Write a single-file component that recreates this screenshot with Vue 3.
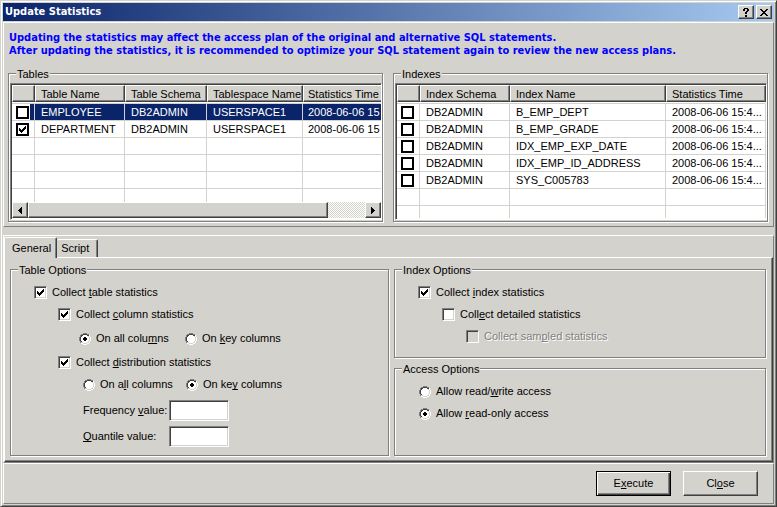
<script setup>
import { ref, reactive, h } from 'vue'

const Tick = () =>
  h('svg', { class: 'mark', width: 7, height: 7, viewBox: '0 0 7 7', 'shape-rendering': 'crispEdges', 'aria-hidden': 'true' }, [
    h('path', { d: 'M0 2h1v1h1v1h1v-1h1v-1h1v-1h1v-1h1v3h-1v1h-1v1h-1v1h-1v1h-1v-1h-1v-1h-1z' })
  ])

const Ring = (props) =>
  h('svg', { class: 'mark', width: 12, height: 12, viewBox: '0 0 12 12', 'shape-rendering': 'crispEdges', 'aria-hidden': 'true' }, [
    h('path', { fill: '#fff', d: 'M4 1h4v1h2v2h1v4h-1v2h-2v1h-4v-1h-2v-2h-1v-4h1v-2h2z' }),
    h('path', { fill: '#808080', d: 'M4 0h4v1h-4zM2 1h2v1h-2zM8 1h2v1h-2zM1 2h1v2h-1zM0 4h1v4h-1zM1 8h1v2h-1z' }),
    h('path', { fill: '#404040', d: 'M4 1h4v1h-4zM2 2h2v1h-2zM8 2h2v1h-2zM2 3h1v1h-1zM1 4h1v4h-1zM2 8h1v1h-1z' }),
    h('path', { fill: '#d4d2cc', d: 'M9 3h1v1h-1zM10 4h1v4h-1zM9 8h1v1h-1zM2 9h2v1h-2zM8 9h2v1h-2zM4 10h4v1h-4z' }),
    h('path', { fill: '#fff', d: 'M10 2h1v2h-1zM11 4h1v4h-1zM10 8h1v2h-1zM8 10h2v1h-2zM2 10h2v1h-2zM4 11h4v1h-4z' }),
    props.on ? h('path', { fill: '#000', d: 'M5 4h2v1h1v2h-1v1h-2v-1h-1v-2h1z' }) : null
  ])
Ring.props = ['on']

const tables = reactive([
  { on: false, cells: ['EMPLOYEE', 'DB2ADMIN', 'USERSPACE1', '2008-06-06 15'], selected: true },
  { on: true, cells: ['DEPARTMENT', 'DB2ADMIN', 'USERSPACE1', '2008-06-06 15'] }
])
const indexes = reactive(
  ['B_EMP_DEPT', 'B_EMP_GRADE', 'IDX_EMP_EXP_DATE', 'IDX_EMP_ID_ADDRESS', 'SYS_C005783'].map((name) => ({
    on: false,
    cells: ['DB2ADMIN', name, '2008-06-06 15:4...']
  }))
)
const lists = [
  { key: 'tables', title: 'Tables', heads: ['Table Name', 'Table Schema', 'Tablespace Name', 'Statistics Time'], rows: tables, blanks: 4, scroll: true },
  { key: 'indexes', title: 'Indexes', heads: ['Index Schema', 'Index Name', 'Statistics Time'], rows: indexes, blanks: 2, scroll: false }
]

const tab = ref('General')
const opt = reactive({ table: true, column: true, dist: true, index: true, detailed: false, sampled: false })
const columnScope = ref('all')
const distScope = ref('key')
const access = ref('read')
const frequency = ref('')
const quantile = ref('')
</script>

<template>
  <main class="window">
    <header class="titlebar">
      <h1>Update Statistics</h1>
      <button type="button" class="sys" aria-label="Help">
        <svg width="6" height="9" viewBox="0 0 6 9" shape-rendering="crispEdges"><path d="M1 0h4v1h1v2h-1v1h-1v2h-2v-2h1v-1h1v-2h-2v2h-2v-2h1zM2 7h2v2h-2z" /></svg>
      </button>
      <button type="button" class="sys" aria-label="Close window">
        <svg width="8" height="7" viewBox="0 0 8 7" shape-rendering="crispEdges"><path d="M0 0h2v1h1v1h2v-1h1v-1h2v1h-1v1h-1v1h-1v1h1v1h1v1h1v1h-2v-1h-1v-1h-2v1h-1v1h-2v-1h1v-1h1v-1h1v-1h-1v-1h-1v-1h-1z" /></svg>
      </button>
    </header>

    <section class="upper">
      <p class="notice">
        Updating the statistics may affect the access plan of the original and alternative SQL statements.<br />
        After updating the statistics, it is recommended to optimize your SQL statement again to review the new access plans.
      </p>
      <div class="lists">
        <fieldset v-for="l in lists" :key="l.key" class="group list-group">
          <legend>{{ l.title }}</legend>
          <div class="listbox">
            <div class="viewport">
              <table :class="l.key">
                <colgroup>
                  <col class="c0" />
                  <col v-for="(t, i) in l.heads" :key="t" :class="'c' + (i + 1)" />
                </colgroup>
                <thead>
                  <tr>
                    <th><span></span></th>
                    <th v-for="t in l.heads" :key="t"><span>{{ t }}</span></th>
                  </tr>
                </thead>
                <tbody>
                  <tr v-for="r in l.rows" :key="r.cells.join()" :class="{ selected: r.selected }">
                    <td class="pick">
                      <span class="tick flat">
                        <input v-model="r.on" type="checkbox" :aria-label="r.cells[l.scroll ? 0 : 1]" />
                        <Tick v-if="r.on" />
                      </span>
                    </td>
                    <td v-for="(c, i) in r.cells" :key="i">{{ c }}</td>
                  </tr>
                  <tr v-for="n in l.blanks" :key="n">
                    <td class="pick"></td>
                    <td v-for="t in l.heads" :key="t"></td>
                  </tr>
                </tbody>
              </table>
            </div>
            <div v-if="l.scroll" class="scrollbar">
              <button type="button" aria-label="Scroll left">
                <svg width="4" height="7" viewBox="0 0 4 7" shape-rendering="crispEdges"><path d="M3 0h1v7h-1v-1h-1v-1h-1v-1h-1v-1h1v-1h1v-1h1z" /></svg>
              </button>
              <div class="thumb"></div>
              <div class="track"></div>
              <button type="button" aria-label="Scroll right">
                <svg width="4" height="7" viewBox="0 0 4 7" shape-rendering="crispEdges"><path d="M0 0h1v1h1v1h1v1h1v1h-1v1h-1v1h-1v1h-1z" /></svg>
              </button>
            </div>
          </div>
        </fieldset>
      </div>
    </section>

    <section class="tabs">
      <nav class="tabrow" role="tablist">
        <button v-for="t in ['General', 'Script']" :key="t" type="button" role="tab" :aria-selected="tab === t" :class="{ active: tab === t }" @click="tab = t">{{ t }}</button>
      </nav>
      <div class="page">
        <fieldset class="group table-options">
          <legend>Table Options</legend>
          <label class="row"><span class="tick"><input v-model="opt.table" type="checkbox" /><Tick v-if="opt.table" /></span><span>Collect <u>t</u>able statistics</span></label>
          <label class="row in1"><span class="tick"><input v-model="opt.column" type="checkbox" /><Tick v-if="opt.column" /></span><span>Collect <u>c</u>olumn statistics</span></label>
          <div class="pair">
            <label class="row"><span class="radio"><input v-model="columnScope" type="radio" name="column" value="all" /><Ring :on="columnScope === 'all'" /></span><span>On all colu<u>m</u>ns</span></label>
            <label class="row"><span class="radio"><input v-model="columnScope" type="radio" name="column" value="key" /><Ring :on="columnScope === 'key'" /></span><span>On <u>k</u>ey columns</span></label>
          </div>
          <label class="row in1"><span class="tick"><input v-model="opt.dist" type="checkbox" /><Tick v-if="opt.dist" /></span><span>Collect <u>d</u>istribution statistics</span></label>
          <div class="pair dist">
            <label class="row"><span class="radio"><input v-model="distScope" type="radio" name="dist" value="all" /><Ring :on="distScope === 'all'" /></span><span>On a<u>l</u>l columns</span></label>
            <label class="row"><span class="radio"><input v-model="distScope" type="radio" name="dist" value="key" /><Ring :on="distScope === 'key'" /></span><span>On ke<u>y</u> columns</span></label>
          </div>
          <div class="values">
            <label for="frequency">Frequency <u>v</u>alue:</label>
            <input id="frequency" v-model="frequency" type="text" />
            <label for="quantile"><u>Q</u>uantile value:</label>
            <input id="quantile" v-model="quantile" type="text" />
          </div>
        </fieldset>

        <div class="side">
          <fieldset class="group index-options">
            <legend>Index Options</legend>
            <label class="row"><span class="tick"><input v-model="opt.index" type="checkbox" /><Tick v-if="opt.index" /></span><span>Collect <u>i</u>ndex statistics</span></label>
            <label class="row in1"><span class="tick"><input v-model="opt.detailed" type="checkbox" /><Tick v-if="opt.detailed" /></span><span>Coll<u>e</u>ct detailed statistics</span></label>
            <label class="row in2 off"><span class="tick"><input v-model="opt.sampled" type="checkbox" :disabled="!opt.detailed" /><Tick v-if="opt.sampled" /></span><span>Collect sam<u>p</u>led statistics</span></label>
          </fieldset>
          <fieldset class="group access-options">
            <legend>Access Options</legend>
            <label class="row"><span class="radio"><input v-model="access" type="radio" name="access" value="write" /><Ring :on="access === 'write'" /></span><span>Allow read/<u>w</u>rite access</span></label>
            <label class="row"><span class="radio"><input v-model="access" type="radio" name="access" value="read" /><Ring :on="access === 'read'" /></span><span>Allow <u>r</u>ead-only access</span></label>
          </fieldset>
        </div>
      </div>
    </section>

    <footer class="actions">
      <button type="button" class="default"><span>E<u>x</u>ecute</span></button>
      <button type="button"><span>Cl<u>o</u>se</span></button>
    </footer>
  </main>
</template>

<style>
body {
  margin: 0;
  background: #d4d2cc;
}
</style>

<style scoped>
* {
  box-sizing: border-box;
}
.window {
  --face: #d4d2cc;
  --gray: #808080;
  --dark: #404040;
  display: flex;
  flex-direction: column;
  min-height: 100vh;
  padding: 1px;
  background: var(--face);
  border: 1px solid;
  border-color: var(--face) var(--dark) var(--dark) var(--face);
  box-shadow: inset 1px 1px #fff, inset -1px -1px var(--gray);
  font: 11px/13px "Liberation Sans", Arial, sans-serif;
  color: #000;
}
button,
input {
  font: inherit;
  color: inherit;
  margin: 0;
  padding: 0;
  border-radius: 0;
}
u {
  text-underline-offset: 1px;
  text-decoration-skip-ink: none;
}
svg {
  display: block;
}
.titlebar {
  display: flex;
  align-items: center;
  height: 18px;
  margin: 1px;
  padding: 0 2px;
  background: linear-gradient(90deg, #0a246a, #a6caf0);
}
h1 {
  flex: 1;
  margin: 0;
  font: bold 11px/18px "DejaVu Sans Condensed", Tahoma, sans-serif;
  color: #fff;
}
.sys,
.scrollbar button {
  display: grid;
  place-items: center;
  width: 16px;
  height: 14px;
  background: var(--face);
  border: 1px solid;
  border-color: #fff var(--dark) var(--dark) #fff;
  box-shadow: inset -1px -1px var(--gray);
}
.sys + .sys {
  margin-left: 2px;
}
.upper {
  padding: 8px 5px 4px 4px;
  border: 1px solid;
  border-color: #fff var(--gray) var(--gray) #fff;
  margin: 0 1px;
}
.notice {
  margin: 0 0 16px;
  padding-left: 1px;
  font: bold 11px/13px "DejaVu Sans Condensed", Tahoma, sans-serif;
  color: #00f;
  white-space: nowrap;
}
.lists {
  display: grid;
  grid-template-columns: 1fr 1fr;
  gap: 10px;
}
/* The etched frame is two one-pixel lines, and the legend sits on top of it. */
.group {
  position: relative;
  min-width: 0;
  margin: 0;
  padding: 0;
  border: 1px solid var(--gray);
  box-shadow: 1px 1px #fff, inset 1px 1px #fff;
}
.group legend {
  position: absolute;
  top: -6px;
  left: 7px;
  padding: 0 1px;
  background: var(--face);
}
.list-group {
  padding: 9px 0 1px 1px;
}
.listbox {
  height: 137px;
  display: flex;
  flex-direction: column;
  background: #fff;
  border: 1px solid;
  border-color: var(--gray) #fff #fff var(--gray);
  box-shadow: inset 1px 1px var(--dark);
  padding: 1px 0 1px 1px;
}
.viewport {
  flex: 1;
  min-height: 0;
  overflow: hidden;
}
table {
  width: 100%;
  table-layout: fixed;
  border-collapse: separate;
  border-spacing: 0;
}
.c0 { width: 23px; }
.c1 { width: 90px; }
.tables .c2 { width: 82px; }
.tables .c3 { width: 96px; }
.indexes .c3 { width: 100px; }
th,
td {
  padding: 0;
  overflow: hidden;
  white-space: nowrap;
  text-align: left;
  font-weight: normal;
}
th {
  padding-bottom: 1px;
  border-bottom: 1px solid var(--face);
}
th span {
  display: block;
  height: 17px;
  padding-left: 5px;
  line-height: 16px;
  background: var(--face);
  border: 1px solid;
  border-color: #fff var(--dark) var(--dark) #fff;
  box-shadow: inset -1px -1px var(--gray);
}
td {
  height: 17px;
  padding-left: 6px;
  line-height: 16px;
  border: solid var(--face);
  border-width: 0 1px 1px 0;
}
/* The last column of the tables list runs on beyond the visible area. */
.tables th:last-child span {
  border-right: 0;
  padding-left: 4px;
  box-shadow: inset 0 -1px var(--gray);
}
.tables td:last-child {
  border-right: 0;
  padding-left: 5px;
}
td.pick {
  padding-left: 4px;
}
.selected td {
  background: #0a246a;
  color: #fff;
}
.selected td.pick {
  background: linear-gradient(90deg, #fff 18px, #0a246a 18px);
}
.scrollbar {
  display: flex;
  height: 16px;
}
.scrollbar button {
  height: 16px;
}
.thumb {
  flex: 0 1 300px;
  background: var(--face);
  border: 1px solid;
  border-color: #fff var(--dark) var(--dark) #fff;
  box-shadow: inset -1px -1px var(--gray);
}
.track {
  flex: 1;
  background: repeating-conic-gradient(#fff 0 25%, var(--face) 0 50%) 0 0 / 2px 2px;
}
.tick,
.radio {
  display: grid;
  place-items: center;
  flex: none;
  width: 13px;
  height: 13px;
}
.radio {
  width: 12px;
  height: 12px;
}
.tick > *,
.radio > * {
  grid-area: 1 / 1;
}
.mark {
  pointer-events: none;
  z-index: 1;
}
.tick input {
  appearance: none;
  width: 13px;
  height: 13px;
  background: #fff;
  border: 1px solid;
  border-color: var(--gray) #fff #fff var(--gray);
  box-shadow: inset 1px 1px var(--dark), inset -1px -1px var(--face);
}
.tick input:disabled {
  background: var(--face);
}
.tick.flat input {
  border: 2px solid #000;
  box-shadow: none;
}
.radio input {
  appearance: none;
  width: 12px;
  height: 12px;
}
.tabs {
  margin: 8px 1px 0;
  border: 1px solid;
  border-color: #fff var(--gray) var(--gray) #fff;
}
.tabrow {
  display: flex;
  align-items: flex-end;
  height: 21px;
}
.tabrow button {
  height: 18px;
  padding: 0 8px 0 4px;
  line-height: 17px;
  background: var(--face);
  border: solid;
  border-width: 1px 1px 0;
  border-color: #fff var(--dark) #fff #fff;
  border-radius: 2px 2px 0 0;
  box-shadow: inset -1px 0 var(--gray);
}
.tabrow button:not(.active) {
  border-left-width: 0;
}
.tabrow .active {
  position: relative;
  z-index: 1;
  height: 21px;
  margin-bottom: -1px;
  padding: 0 5px 0 7px;
}
.page {
  display: grid;
  grid-template-columns: 379px 1fr;
  gap: 5px;
  padding: 11px 6px 5px 5px;
  border: 1px solid;
  border-color: #fff var(--dark) var(--dark) #fff;
  box-shadow: inset -1px -1px var(--gray);
}
.row {
  display: flex;
  align-items: center;
  gap: 5px;
  height: 13px;
}
.table-options {
  padding: 16px 8px 8px 23px;
}
.in1 { margin: 9px 0 0 24px; }
.in2 { margin: 9px 0 0 48px; }
.pair {
  display: grid;
  grid-template-columns: 106px 1fr;
  padding-left: 45px;
  margin: 11px 0;
}
.pair + .in1 { margin-top: 0; }
.pair.dist {
  grid-template-columns: 103px 1fr;
  padding-left: 49px;
  margin: 9px 0;
}
.values {
  display: grid;
  grid-template-columns: 86px 60px;
  row-gap: 5px;
  align-items: center;
  padding-left: 49px;
}
.values input {
  width: 60px;
  height: 21px;
  padding: 0 3px;
  background: #fff;
  border: 1px solid;
  border-color: var(--gray) #fff #fff var(--gray);
  box-shadow: inset 1px 1px var(--dark), inset -1px -1px var(--face);
}
.side {
  display: flex;
  flex-direction: column;
  gap: 10px;
}
.index-options {
  height: 89px;
  padding: 16px 8px 0 23px;
}
.access-options {
  flex: 1;
  padding: 16px 8px 0 24px;
}
.access-options .row + .row {
  margin-top: 9px;
}
.off {
  color: var(--gray);
  text-shadow: 1px 1px #fff;
}
.actions {
  flex: 1;
  display: flex;
  justify-content: flex-end;
  align-items: flex-start;
  gap: 12px;
  margin: 0 1px 1px;
  padding: 7px 15px;
  border: 1px solid;
  border-color: #fff var(--gray) var(--gray) #fff;
}
.actions button {
  width: 75px;
  height: 25px;
  background: var(--face);
  border: 1px solid;
  border-color: #fff var(--dark) var(--dark) #fff;
  box-shadow: inset -1px -1px var(--gray);
}
.actions .default {
  border-color: #000;
  box-shadow: inset 1px 1px #fff, inset -1px -1px var(--dark), inset -2px -2px var(--gray);
}
</style>
